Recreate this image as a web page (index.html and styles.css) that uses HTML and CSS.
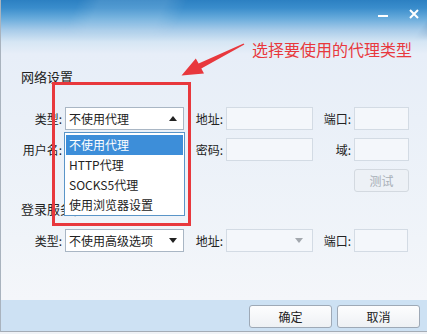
FILE: index.html
```html
<!DOCTYPE html>
<html lang="zh">
<head>
<meta charset="utf-8">
<link rel="stylesheet" href="styles.css">
</head>
<body>
<div class="dialog">
  <div class="titlebar">
    <span class="tb-min"></span>
    <svg class="tb-close" width="10" height="10" viewBox="0 0 10 10"><path d="M1 1 L9 9 M9 1 L1 9" stroke="#fff" stroke-width="2"/></svg>
  </div>
  <div class="content">
    <div class="section-title">网络设置</div>
    <div class="grid">
      <span class="lbl">类型:</span>
      <div class="select open"><span>不使用代理</span><span class="tri up"></span></div>
      <span class="lbl">地址:</span>
      <div class="input"></div>
      <span class="lbl">端口:</span>
      <div class="input"></div>

      <span class="lbl">用户名:</span>
      <div class="input"></div>
      <span class="lbl">密码:</span>
      <div class="input"></div>
      <span class="lbl">域:</span>
      <div class="input"></div>

      <span class="skip"></span>
      <button class="btn disabled">测试</button>
    </div>
    <div class="section-title second">登录服务器</div>
    <div class="grid">
      <span class="lbl">类型:</span>
      <div class="select white"><span>不使用高级选项</span><span class="tri down"></span></div>
      <span class="lbl">地址:</span>
      <div class="select plain"><span></span><span class="tri down gray"></span></div>
      <span class="lbl">端口:</span>
      <div class="input short"></div>
    </div>
  </div>
  <div class="footer">
    <button class="btn foot">确定</button>
    <button class="btn foot">取消</button>
  </div>

  <ul class="dropdown">
    <li class="active">不使用代理</li>
    <li>HTTP代理</li>
    <li>SOCKS5代理</li>
    <li>使用浏览器设置</li>
  </ul>
  <div class="redbox"></div>
  <svg class="arrow" width="427" height="334" viewBox="0 0 427 334">
    <polygon points="242.6,43.4 243.4,44.6 200.3,68.6 203,73.6 180.5,75.5 194.8,58.6 197.6,63.6" fill="#e8383d"/>
  </svg>
  <div class="note">选择要使用的代理类型</div>
</div>
</body>
</html>
```

FILE: styles.css
```css
* { box-sizing: border-box; margin: 0; padding: 0; }
html, body { width: 427px; height: 334px; overflow: hidden; }
body {
  font-family: "Noto Sans CJK SC", "Microsoft YaHei", "Noto Sans", sans-serif;
  font-size: 12px;
  color: #222;
  background: #f0f3f7;
}
.dialog {
  position: relative;
  width: 427px;
  height: 332px;
  display: flex;
  flex-direction: column;
  border-left: 1px solid #a9b3be;
  border-bottom: 1px solid #a4acb6;
  background:
    linear-gradient(180deg, #2c80c2 0px, #3a8dcc 8px, #66aadb 18px, #a7cbe9 30px, #d6e6f4 42px, #e7eef8 54px, #eaf0f8 120px, #f0f4f9 240px, #f4f6fa 300px);
}
.titlebar {
  position: absolute;
  left: 0; top: 0; right: 0; height: 40px;
  background:
    linear-gradient(115deg, rgba(255,255,255,0) 0px, rgba(255,255,255,0) 70px, rgba(255,255,255,0.12) 90px, rgba(255,255,255,0.12) 150px, rgba(255,255,255,0) 170px),
    linear-gradient(125deg, rgba(0,40,90,0) 360px, rgba(20,60,110,0.35) 372px, rgba(0,40,90,0) 380px);
  -webkit-mask: linear-gradient(180deg, #000 0, #000 20px, transparent 40px);
          mask: linear-gradient(180deg, #000 0, #000 20px, transparent 40px);
}
.tb-min {
  position: absolute;
  left: 377px; top: 15px;
  width: 10px; height: 2px;
  background: #fff;
}
.tb-close {
  position: absolute;
  left: 408px; top: 9px;
}
.content {
  padding: 68px 0 0 16px;
  flex: 1;
}
.section-title {
  font-size: 13px;
  line-height: 18px;
  height: 18px;
  padding-left: 4px;
  margin-bottom: 21px;
  color: #222;
}
.section-title.second {
  margin-top: 8px;
  margin-bottom: 11px;
}
.grid {
  display: grid;
  grid-template-columns: 45px 119px 36px 87px 35px 55px;
  grid-auto-rows: 23px;
  column-gap: 3px;
  row-gap: 8px;
}
.lbl {
  text-align: right;
  line-height: 23px;
  white-space: nowrap;
}
.skip { grid-column: 1 / 6; }
.input {
  border: 1px solid #d3dbe4;
  background: #f4f7fb;
}
.input.short { width: 54px; }
.select {
  display: flex;
  align-items: center;
  justify-content: space-between;
  padding: 0 5px 0 3px;
  line-height: 21px;
  border: 1px solid #a9b6c4;
  background: #fff;
  white-space: nowrap;
}
.select.plain {
  border-color: #d3dbe4;
  background: #f4f7fb;
}
.tri {
  width: 0; height: 0;
  border-left: 4px solid transparent;
  border-right: 4px solid transparent;
  margin-right: 1px;
}
.tri.up { border-bottom: 5px solid #222; }
.tri.down { border-top: 5px solid #222; }
.tri.down.gray { border-top-color: #a3a8ae; margin-right: 4px; }
.btn {
  font-family: inherit;
  font-size: 12px;
  border: 1px solid #9ea9b6;
  border-radius: 3px;
  background: linear-gradient(180deg, #fdfdfe 0%, #eef1f4 100%);
  color: #222;
}
.btn.disabled {
  border-color: #d3d9e0;
  background: #edf1f6;
  color: #a8afb7;
}
.footer {
  height: 31px;
  background: #cde1f3;
  display: flex;
  justify-content: flex-end;
  align-items: flex-start;
  gap: 5px;
  padding: 5px 7px 0 0;
}
.btn.foot {
  width: 83px;
  height: 23px;
}
.dropdown {
  position: absolute;
  left: 63px; top: 132px;
  width: 121px; height: 84px;
  list-style: none;
  background: #fff;
  border: 1px solid #5a95c8;
  padding: 2px 1px 0 1px;
}
.dropdown li {
  height: 20px;
  line-height: 20px;
  padding-left: 3px;
  white-space: nowrap;
}
.dropdown li.active {
  background: #3d8ed9;
  color: #fff;
}
.redbox {
  position: absolute;
  left: 51px; top: 82px;
  width: 139px; height: 144px;
  border: 3px solid #e8383d;
}
.arrow {
  position: absolute;
  left: 0; top: 0;
}
.note {
  position: absolute;
  left: 251px; top: 39px;
  font-size: 16px;
  line-height: 20px;
  color: #e8383d;
  white-space: nowrap;
}
```
